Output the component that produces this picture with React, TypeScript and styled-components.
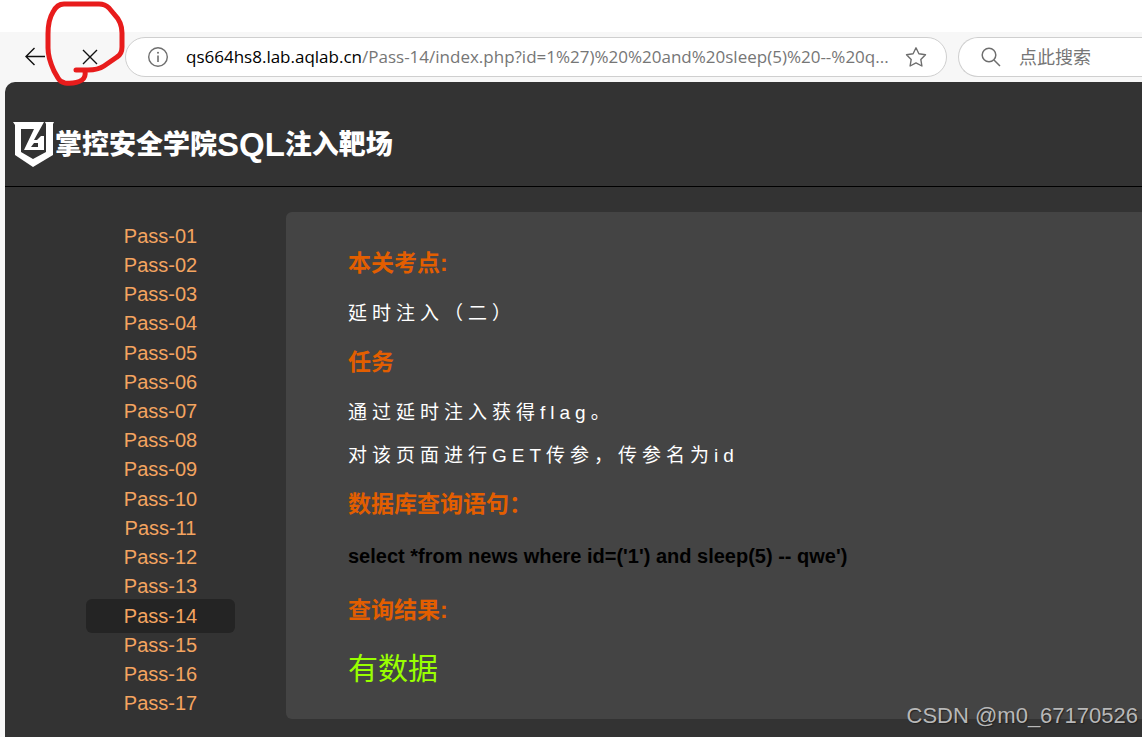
import React from "react";
import styled, { createGlobalStyle } from "styled-components";

const GlobalStyle = createGlobalStyle`
  * { box-sizing: border-box; }
  body {
    margin: 0;
    background: #f7f7f7;
    font-family: "Liberation Sans", "Noto Sans CJK SC", sans-serif;
  }
`;

const Window = styled.div`
  position: relative;
  display: flex;
  flex-direction: column;
  min-height: 100vh;
  overflow: hidden;
`;

const TabStrip = styled.div`
  height: 32px;
  background: #ffffff;
`;

const Toolbar = styled.div`
  display: flex;
  align-items: center;
  height: 50px;
  padding-left: 20px;
  background: #f7f7f7;
`;

const ToolButton = styled.button<{ $gap?: number }>`
  display: flex;
  flex: none;
  padding: 0;
  margin-right: ${(p) => p.$gap ?? 0}px;
  border: 0;
  background: none;
  color: #111111;
`;

const Field = styled.div`
  display: flex;
  align-items: center;
  height: 40px;
  border: 1px solid #cfcfcf;
  border-radius: 20px;
  background: #ffffff;
  color: #767676;
  font-family: "Open Sans", "Noto Sans CJK SC", sans-serif;
`;

const AddressField = styled(Field)`
  flex: 1;
  min-width: 0;
  padding: 0 18px 0 20px;
`;

const SearchField = styled(Field)`
  flex: none;
  width: 184px;
  margin-left: 11px;
  padding-left: 20px;
  border-right: 0;
  border-radius: 20px 0 0 20px;
`;

const Address = styled.div`
  flex: 1;
  min-width: 0;
  margin-left: 16px;
  overflow: hidden;
  white-space: nowrap;
  font-size: 17px;
  line-height: 24px;
`;

const Host = styled.span`
  color: #000000;
`;

const SearchInput = styled.input`
  flex: 1;
  min-width: 0;
  margin-left: 16px;
  padding: 0;
  border: 0;
  outline: 0;
  background: none;
  font: inherit;
  font-size: 18px;
  &::placeholder { color: #767676; opacity: 1; }
`;

const Page = styled.div`
  flex: 1;
  margin-left: 5px;
  border-top-left-radius: 10px;
  background: #333333;
`;

const Header = styled.header`
  display: flex;
  align-items: center;
  height: 105px;
  padding: 22px 0 0 8px;
  border-bottom: 1px solid #000000;
`;

const Title = styled.h1`
  display: flex;
  align-items: center;
  margin: 0;
  color: #ffffff;
  font-size: 27px;
  font-weight: 900;
  line-height: 40px;
  white-space: nowrap;
`;

const Latin = styled.span`
  font-size: 33px;
  font-weight: 700;
`;

const Body = styled.div`
  display: flex;
  align-items: flex-start;
  padding: 25px 0 18px 81px;
`;

const PassList = styled.ul`
  display: grid;
  grid-auto-rows: 1fr;
  flex: none;
  width: 149px;
  height: 497px;
  margin: 9px 51px 0 0;
  padding: 0;
  list-style: none;
`;

const PassItem = styled.li`
  display: flex;
  align-items: center;
  min-height: 0;
`;

const PassLink = styled.a<{ $active: boolean }>`
  flex: 1;
  height: 34px;
  margin: -4px 0;
  border-radius: 6px;
  background: ${(p) => (p.$active ? "#242424" : "transparent")};
  color: #f4a460;
  font-size: 20px;
  line-height: 34px;
  text-align: center;
  text-decoration: none;
`;

const Card = styled.main`
  flex: 1;
  min-width: 0;
  padding: 36px 20px 28px 62px;
  border-radius: 6px 0 0 6px;
  background: #444444;
`;

const Heading = styled.h2`
  margin: 0 0 22px;
  color: #e35e00;
  font-size: 23px;
  font-weight: 700;
  line-height: 30px;
`;

const Paragraph = styled.p`
  margin: 0 0 15px;
  color: #ffffff;
  font-size: 19px;
  letter-spacing: 5px;
  line-height: 28px;
`;

const Query = styled.p`
  margin: 0 0 24px;
  color: #000000;
  font-size: 20px;
  font-weight: 700;
  line-height: 30px;
`;

const Result = styled.p`
  margin: 0;
  color: #99ff00;
  font-size: 30px;
  line-height: 44px;
`;

const Section = styled.section`
  & + & { padding-top: 4px; }
`;

const Watermark = styled.div`
  position: absolute;
  right: 4px;
  bottom: 8px;
  color: #b8b8b8;
  font-size: 22px;
  line-height: 26px;
  text-shadow: 1px 1px 1px #222222;
`;

const Scribble = styled.svg`
  position: absolute;
  top: 0;
  left: 40px;
  pointer-events: none;
`;

const passes = Array.from({ length: 17 }, (_, i) => String(i + 1).padStart(2, "0"));

const Logo = () => (
  <svg width="42" height="46" viewBox="0 0 42 46" aria-hidden="true">
    <path
      fill="#ffffff"
      fillRule="evenodd"
      d="M0 0H31L21 18H24L28 14H31V28H11L21 7H8V30L20 37L33 30V2L32 0H41L40 2V33L20 45L2 33V3ZM21 21L18 25H25V21Z"
    />
  </svg>
);

export default function App() {
  return (
    <>
      <GlobalStyle />
      <Window>
        <TabStrip />
        <Toolbar>
          <ToolButton $gap={27} aria-label="Back">
            <svg width="30" height="30" viewBox="0 0 30 30" fill="none" stroke="currentColor" strokeWidth="1.4">
              <path d="M25 14.5H6M14.5 6L6 14.5L14.5 23" />
            </svg>
          </ToolButton>
          <ToolButton $gap={22} aria-label="Stop">
            <svg width="26" height="30" viewBox="0 0 26 30" fill="none" stroke="currentColor" strokeWidth="1.4">
              <path d="M6 8L20 22M20 8L6 22" />
            </svg>
          </ToolButton>
          <AddressField>
            <ToolButton aria-label="Site information">
              <svg width="24" height="24" viewBox="0 0 24 24" fill="none" stroke="#6e6e6e" strokeWidth="1.4">
                <circle cx="12" cy="12" r="9.3" />
                <path d="M12 10.5V17" strokeWidth="1.6" />
                <circle cx="12" cy="7.8" r="1" fill="#6e6e6e" stroke="none" />
              </svg>
            </ToolButton>
            <Address role="textbox" aria-label="Address">
              <Host>qs664hs8.lab.aqlab.cn</Host>
              /Pass-14/index.php?id=1%27)%20%20and%20sleep(5)%20--%20q...
            </Address>
            <ToolButton aria-label="Add to favourites">
              <svg width="24" height="24" viewBox="0 0 24 24" fill="none" stroke="#6e6e6e" strokeWidth="1.4" strokeLinejoin="round">
                <path d="M12 2.8L14.9 8.7L21.5 9.7L16.8 14.4L17.9 21L12 17.9L6.1 21L7.2 14.4L2.5 9.7L9.1 8.7Z" />
              </svg>
            </ToolButton>
          </AddressField>
          <SearchField>
            <svg width="24" height="24" viewBox="0 0 24 24" fill="none" stroke="#6e6e6e" strokeWidth="1.5" aria-hidden="true">
              <circle cx="10" cy="10" r="6.8" />
              <path d="M15 15L21 21" />
            </svg>
            <SearchInput type="search" aria-label="搜索" placeholder="点此搜索" />
          </SearchField>
        </Toolbar>
        <Page>
          <Header>
            <Logo />
            <Title>
              掌控安全学院<Latin>SQL</Latin>注入靶场
            </Title>
          </Header>
          <Body>
            <nav>
              <PassList>
                {passes.map((n) => (
                  <PassItem key={n}>
                    <PassLink href={`#pass-${n}`} $active={n === "14"}>
                      Pass-{n}
                    </PassLink>
                  </PassItem>
                ))}
              </PassList>
            </nav>
            <Card>
              <Section>
                <Heading>本关考点:</Heading>
                <Paragraph>延时注入（二）</Paragraph>
              </Section>
              <Section>
                <Heading>任务</Heading>
                <Paragraph>通过延时注入获得flag。</Paragraph>
                <Paragraph>对该页面进行GET传参，传参名为id</Paragraph>
              </Section>
              <Section>
                <Heading>数据库查询语句：</Heading>
                <Query>select *from news where id=('1') and sleep(5) -- qwe')</Query>
                <Heading>查询结果:</Heading>
                <Result>有数据</Result>
              </Section>
            </Card>
          </Body>
        </Page>
        <Watermark>CSDN @m0_67170526</Watermark>
        <Scribble width="90" height="90" viewBox="40 0 90 90" fill="none" stroke="#e81c1c" strokeWidth="5" strokeLinecap="round" strokeLinejoin="round" aria-hidden="true">
          <path d="M76 70H88Q98 70 104 66L117 57Q122 54 122 47V33Q122 22 114 14L109 8Q105 4 99 4H64Q57 4 53 12Q48 20 48 34V48Q48 58 54 71L58 78Q60 82 65 83Q76 84 82 80Q86 77 85 71" />
        </Scribble>
      </Window>
    </>
  );
}
